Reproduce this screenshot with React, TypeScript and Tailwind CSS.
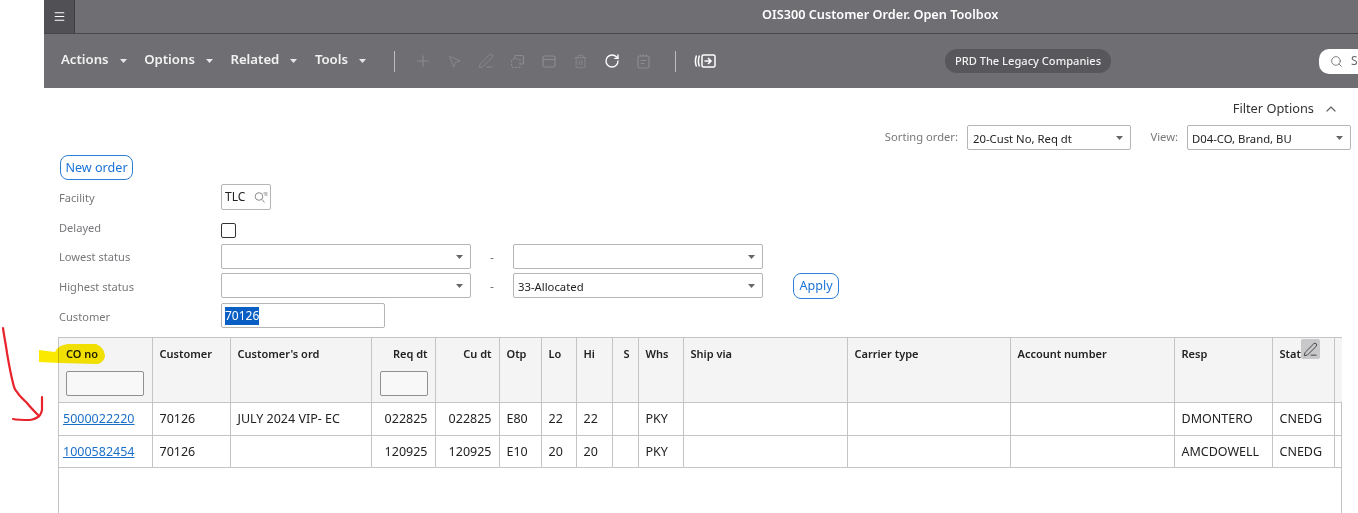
import React from "react";
import { Plus, MousePointer2, RotateCw, Trash2, Search, ChevronUp, Menu, PenLine } from "lucide-react";

const cols = [
  { name: "CO no", w: 93 },
  { name: "Customer", w: 78 },
  { name: "Customer's ord", w: 141 },
  { name: "Req dt", w: 64, right: true },
  { name: "Cu dt", w: 64, right: true },
  { name: "Otp", w: 42 },
  { name: "Lo", w: 35 },
  { name: "Hi", w: 36 },
  { name: "S", w: 26 },
  { name: "Whs", w: 45 },
  { name: "Ship via", w: 164 },
  { name: "Carrier type", w: 163 },
  { name: "Account number", w: 164 },
  { name: "Resp", w: 98 },
  { name: "Stat", w: 62 },
  { name: "", w: 8 },
];

const rows = [
  ["5000022220", "70126", "JULY 2024 VIP- EC", "022825", "022825", "E80", "22", "22", "", "PKY", "", "", "", "DMONTERO", "CNEDG", ""],
  ["1000582454", "70126", "", "120925", "120925", "E10", "20", "20", "", "PKY", "", "", "", "AMCDOWELL", "CNEDG", ""],
];

function Caret({ className = "" }: { className?: string }) {
  return (
    <svg width="7" height="4" viewBox="0 0 7 4" className={className}>
      <path d="M0 0h7L3.5 4z" fill="currentColor" />
    </svg>
  );
}

function MenuItem({ label }: { label: string }) {
  return (
    <div className="flex items-center gap-[11px] mr-[17.5px] text-[13.2px] font-semibold text-[#f2f2f2]">
      <span>{label}</span>
      <Caret className="mt-[3px] text-[#e8e8e8]" />
    </div>
  );
}

function Select({ w, value = "", pl = "pl-[4px]" }: { w: string; value?: string; pl?: string }) {
  return (
    <div className={`${w} h-[25px] shrink-0 flex items-center justify-between ${pl} pr-[7px] bg-white border border-[#b5b5b5] rounded-[2px] text-[11.3px] text-[#222]`}>
      <span className="pt-[4px]">{value}</span>
      <Caret className="text-[#666]" />
    </div>
  );
}

function Label({ children }: { children: React.ReactNode }) {
  return <div className="w-[162px] pt-[3px] text-[11.1px] text-[#77777b]">{children}</div>;
}

function Tool({ children }: { children: React.ReactNode }) {
  return <div className="w-[31.5px] flex items-center justify-center">{children}</div>;
}

export default function App() {
  const dim = "text-[#8b8b90]";
  return (
    <div className="relative h-[513px] w-[1358px] overflow-hidden bg-white font-['Noto_Sans',sans-serif] text-[12px] text-[#222]">
      <div className="ml-[44px]">
        {/* Title bar */}
        <div className="h-[34px] bg-[#6e6e73] border-b border-[#47474b] flex">
          <div className="w-[31px] h-[33px] bg-[#515155] border-r border-[#3c3c40] flex items-center justify-center">
            <Menu size={13} strokeWidth={2} className="text-white" />
          </div>
          <div className="flex-1 pl-[687px] pt-[5px] text-[12.7px] font-semibold text-white whitespace-nowrap">
            OIS300 Customer Order. Open Toolbox
          </div>
        </div>

        {/* Toolbar */}
        <div className="h-[54px] bg-[#6e6e73] flex items-center pl-[17px]">
          <div className="flex items-center w-[333px] shrink-0 pb-[3px]">
            <MenuItem label="Actions" />
            <MenuItem label="Options" />
            <MenuItem label="Related" />
            <MenuItem label="Tools" />
          </div>
          <div className="w-px h-[21px] shrink-0 bg-[#bdbdc0]" />
          <div className={`flex items-center shrink-0 ml-[12px] ${dim}`}>
            <Tool><Plus size={18} strokeWidth={1.5} /></Tool>
            <Tool><MousePointer2 size={15} strokeWidth={1.4} /></Tool>
            <Tool><PenLine size={16} strokeWidth={1.4} /></Tool>
            <Tool>
              <svg width="15" height="15" viewBox="0 0 15 15" fill="none" stroke="currentColor" strokeWidth="1.2">
                <path d="M5 1.5h7.5a1 1 0 0 1 1 1V9a1 1 0 0 1-1 1H10" />
                <path d="M5 1.5V4.5" />
                <rect x="1.5" y="5" width="8.5" height="8.5" rx="1" strokeDasharray="2 1.5" />
              </svg>
            </Tool>
            <Tool>
              <svg width="14" height="13" viewBox="0 0 14 13" fill="none" stroke="currentColor" strokeWidth="1.2">
                <rect x="1" y="1" width="12" height="11" rx="1.5" />
                <path d="M1 4.5h12" />
              </svg>
            </Tool>
            <Tool><Trash2 size={15} strokeWidth={1.4} /></Tool>
            <Tool><RotateCw size={16} strokeWidth={2} className="text-white" /></Tool>
            <Tool>
              <svg width="13" height="15" viewBox="0 0 13 15" fill="none" stroke="currentColor" strokeWidth="1.2">
                <rect x="1" y="2" width="11" height="12" rx="1.5" />
                <path d="M3.5 0.5v2M6.5 0.5v2M9.5 0.5v2M3.5 6.5h6M3.5 9.5h4" />
              </svg>
            </Tool>
          </div>
          <div className="w-px h-[21px] shrink-0 bg-[#bdbdc0] ml-[16px]" />
          <svg width="22" height="14" viewBox="0 0 22 14" className="ml-[18px] shrink-0 text-white" fill="none" stroke="currentColor" strokeWidth="1.5">
            <path d="M2.5 1.5C1.1 5 1.1 9 2.5 12.5M5.5 1.5C4.1 5 4.1 9 5.5 12.5" />
            <rect x="8" y="1" width="13" height="12" rx="1.5" />
            <path d="M10.5 7h6.5M14 4l3 3-3 3" />
          </svg>
          <div className="ml-[229px] h-[24px] w-[166px] shrink-0 rounded-full bg-[#58585c] flex items-center justify-center text-[11.1px] font-medium text-[#f2f2f2] whitespace-nowrap">
            PRD The Legacy Companies
          </div>
          <div className="ml-[208px] h-[25px] w-[60px] shrink-0 rounded-l-[10px] bg-white flex items-center pl-[11px] gap-[8px] text-[#666]">
            <Search size={13} strokeWidth={1.5} />
            <span className="text-[12px]">Se</span>
          </div>
        </div>

        {/* Filter options */}
        <div className="h-[37px] flex items-center justify-end pr-[19px] pt-[5px] text-[12.8px] text-[#333]">
          <span>Filter Options</span>
          <ChevronUp size={16} strokeWidth={1.8} className="ml-[9px] text-[#666]" />
        </div>

        {/* Sort + view */}
        <div className="h-[25px] flex items-center justify-end pr-[7px] text-[11.2px] text-[#77777b]">
          <span className="mr-[9px] -mt-[1px]">Sorting order:</span>
          <Select w="w-[164px]" value="20-Cust No, Req dt" pl="pl-[5px]" />
          <span className="w-[56px] pr-[9px] text-right -mt-[1px]">View:</span>
          <Select w="w-[164px]" value="D04-CO, Brand, BU" pl="pl-[4px]" />
        </div>

        {/* Form */}
        <div className="pl-[15px] pt-[5px]">
          <div className="ml-px w-[73px] h-[25px] pt-[1px] flex items-center justify-center rounded-[8px] border border-[#2f7fd8] text-[12.6px] text-[#1a73d9]">
            New order
          </div>
          <div className="flex items-center h-[26px] mt-[4px]">
            <Label>Facility</Label>
            <div className="w-[50px] h-[26px] border border-[#b5b5b5] rounded-[2px] flex items-center justify-between pl-[3px] pr-[2px] text-[12px]">
              <span className="text-[#222]">TLC</span>
              <svg width="14" height="11" viewBox="0 0 14 11" fill="none" stroke="#8a8a8a" strokeWidth="1">
                <circle cx="5" cy="4.5" r="3.8" />
                <path d="M8 7.5l2.5 3M9.5 1h4M10.5 3h3" />
              </svg>
            </div>
          </div>
          <div className="flex items-center h-[34px]">
            <Label>Delayed</Label>
            <div className="w-[15px] h-[15px] mt-[7px] border border-[#333] rounded-[2px]" />
          </div>
          <div className="flex items-center h-[25px]">
            <div className="w-[162px] pt-[1px] text-[11.1px] text-[#77777b]">Lowest status</div>
            <Select w="w-[250px]" />
            <span className="w-[42px] pt-[2px] text-center text-[#77777b]">-</span>
            <Select w="w-[250px]" />
          </div>
          <div className="flex items-center h-[25px] mt-[4px]">
            <Label>Highest status</Label>
            <Select w="w-[250px]" />
            <span className="w-[42px] pt-[2px] text-center text-[#77777b]">-</span>
            <Select w="w-[250px]" value="33-Allocated" />
            <div className="ml-[30px] mt-[1px] w-[46px] h-[26px] flex items-center justify-center rounded-[8px] border border-[#2f7fd8] text-[12.6px] text-[#1a73d9]">
              Apply
            </div>
          </div>
          <div className="flex items-center h-[25px] mt-[5px]">
            <Label>Customer</Label>
            <div className="w-[164px] h-[25px] border border-[#b5b5b5] rounded-[2px] flex items-center pl-[3px] text-[12px]">
              <span className="bg-[#0a5fc4] text-white">70126</span>
            </div>
          </div>
        </div>

        {/* Table */}
        <div className="relative mt-[9px] ml-[14px] w-[1284px] h-[180px] border border-[#c4c4c4] border-b-0">
          <table className="table-fixed border-collapse w-[1283px] text-[12.5px] text-[#222]">
            <colgroup>
              {cols.map((c, i) => (
                <col key={i} style={{ width: c.w }} />
              ))}
            </colgroup>
            <thead>
              <tr className="h-[64px] bg-[#f4f4f4]">
                {cols.map((c, i) => (
                  <th key={i} className="align-top p-0 border-b border-r last:border-r-0 border-[#c4c4c4] text-left text-[11px] font-semibold whitespace-nowrap">
                    <div className={`pt-[8px] h-[64px] ${i === 8 ? "pl-[11px]" : "pl-[7px]"} ${c.right ? "flex flex-col items-end pr-[7px]" : ""}`}>
                      <div>{c.name}</div>
                      {i === 0 && <div className="mt-[8px] w-[78px] h-[25px] border border-[#8f8f94] rounded-[2px] bg-[#f8f8f8]" />}
                      {i === 3 && <div className="mt-[8px] w-[48px] h-[25px] border border-[#8f8f94] rounded-[2px] bg-[#f8f8f8]" />}
                    </div>
                  </th>
                ))}
              </tr>
            </thead>
            <tbody>
              {rows.map((r, ri) => (
                <tr key={ri} className={ri === 0 ? "h-[33px]" : "h-[32px]"}>
                  {r.map((v, i) => (
                    <td key={i} className={`p-0 pt-[1px] border-b border-r last:border-r-0 border-[#c4c4c4] whitespace-nowrap ${cols[i].right ? "text-right pr-[7px]" : i === 0 ? "pl-[4px]" : "pl-[7px]"}`}>
                      {i === 0 ? <span className="text-[#1a6fc9] underline">{v}</span> : v}
                    </td>
                  ))}
                </tr>
              ))}
            </tbody>
          </table>
          {/* Hover edit button */}
          <div className="absolute left-[1242px] top-[1px] w-[19px] h-[20px] rounded-[2px] bg-[#c8c8cb] flex items-center justify-center">
            <PenLine size={15} strokeWidth={1.4} className="text-[#333]" />
          </div>
        </div>
      </div>

      {/* Annotations */}
      <svg className="absolute left-0 top-0 pointer-events-none mix-blend-multiply" width="160" height="513" viewBox="0 0 160 513" fill="none">
        <path d="M39 350 L55 352 Q58 345 68 344 L96 344 Q104 347 105 356 Q104 362 98 364 L60 363 L39 362 Z" fill="#fbe900" />
      </svg>
      <svg className="absolute left-0 top-0 pointer-events-none" width="60" height="513" viewBox="0 0 60 513" fill="none">
        <path d="M3 328 C4 336 6 345 7 353 C9 365 11 375 13 383 C14 388 15 390 17 392 C20 397 24 400 27 403 C31 408 35 412 38 415 M42 397 C42 402 42 406 42 410 C41 414 40 416 38 417 C35 419 33 420 30 420 C24 420 18 420 13 419" stroke="#e8232b" strokeWidth="2.2" strokeLinecap="round" strokeLinejoin="round" />
      </svg>
    </div>
  );
}
